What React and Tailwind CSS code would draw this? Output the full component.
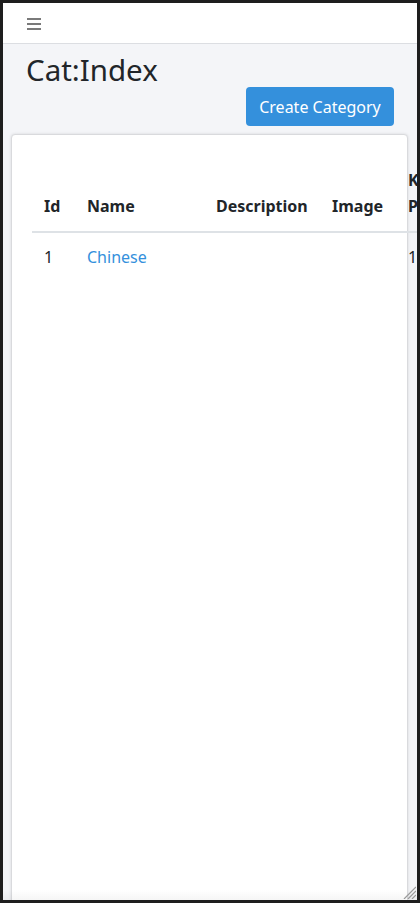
import React from 'react';

const columns = [
  { key: 'id', label: 'Id', width: 'w-[43px]' },
  { key: 'name', label: 'Name', width: 'w-[129px]' },
  { key: 'description', label: 'Description', width: 'w-[116px]' },
  { key: 'image', label: 'Image', width: 'w-[76px]' },
  { key: 'kitchen', label: 'Kitchen Printer', width: 'w-[100px]' },
];

const categories = [
  { id: 1, name: 'Chinese', description: '', image: '', kitchen: '10' },
];

function Hamburger() {
  return (
    <div className="flex flex-col gap-[3px] w-[14px]">
      <span className="block h-[2px] bg-[#7a7a7a]"></span>
      <span className="block h-[2px] bg-[#7a7a7a]"></span>
      <span className="block h-[2px] bg-[#7a7a7a]"></span>
    </div>
  );
}

export default function App() {
  return (
    <div className="w-[420px] h-[903px] bg-[#1e1e1e] p-[3px] font-['Noto_Sans',sans-serif] text-[#212529]">
      <div className="relative h-full overflow-hidden bg-[#f4f5f8] flex flex-col">
        {/* Top navbar */}
        <nav className="h-[41px] shrink-0 bg-white border-b border-[#dcdee2] flex items-center pl-[24px] pt-[2px]">
          <Hamburger />
        </nav>

        {/* Page heading */}
        <h1 className="mt-[9px] pl-[23px] h-[34px] leading-[34px] text-[29.5px] font-normal">Cat:Index</h1>
        <div className="flex justify-end pr-[23px]">
          <button
            type="button"
            className="w-[148px] h-[39px] rounded-[4px] bg-[#3490dc] text-white text-[16px] leading-[24px]"
          >
            Create Category
          </button>
        </div>

        {/* Card */}
        <div className="flex-1 mt-[8px] ml-[8px] mr-[9px] mb-[-10px] bg-white border border-[#d9dadd] rounded-[4px] shadow-[0_0_3px_rgba(0,0,0,0.12)]">
          <div className="pl-[20px] pt-[21px]">
            <table className="table-fixed border-collapse w-[464px] text-[16px] leading-[25.6px]">
              <thead>
                <tr>
                  {columns.map(col => (
                    <th
                      key={col.key}
                      className={`${col.width} px-[12px] py-[12px] text-left align-bottom font-bold border-b-2 border-[#dee2e6]`}
                    >
                      {col.label}
                    </th>
                  ))}
                </tr>
              </thead>
              <tbody>
                {categories.map(cat => (
                  <tr key={cat.id}>
                    <td className="p-[12px] align-top">{cat.id}</td>
                    <td className="p-[12px] align-top">
                      <a href="#" className="text-[#3490dc]">{cat.name}</a>
                    </td>
                    <td className="p-[12px] align-top">{cat.description}</td>
                    <td className="p-[12px] align-top">{cat.image}</td>
                    <td className="p-[12px] align-top">{cat.kitchen}</td>
                  </tr>
                ))}
              </tbody>
            </table>
          </div>
        </div>

        {/* bottom fade + resize grip */}
        <div className="absolute left-0 right-0 bottom-0 h-[10px] bg-gradient-to-b from-transparent to-[rgba(0,0,0,0.04)] pointer-events-none"></div>
        <svg className="absolute right-[1px] bottom-[1px]" width="14" height="14" viewBox="0 0 14 14">
          <line x1="2" y1="14" x2="14" y2="2" stroke="#9a9a9a" strokeWidth="1.2" />
          <line x1="6" y1="14" x2="14" y2="6" stroke="#9a9a9a" strokeWidth="1.2" />
          <line x1="10" y1="14" x2="14" y2="10" stroke="#9a9a9a" strokeWidth="1.2" />
        </svg>
      </div>
    </div>
  );
}
